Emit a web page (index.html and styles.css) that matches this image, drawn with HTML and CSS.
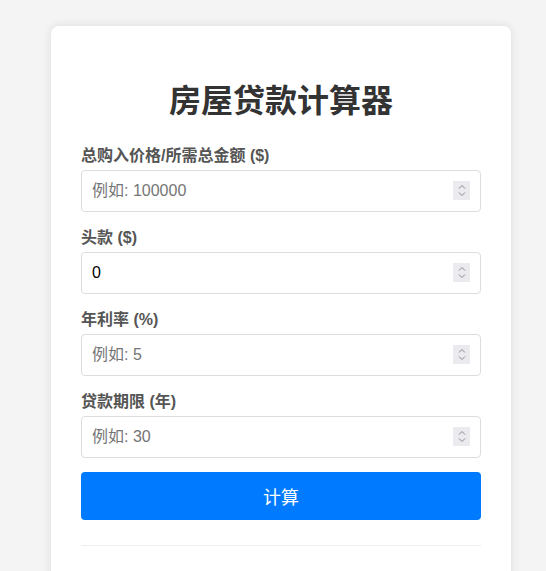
FILE: index.html
```html
<!DOCTYPE html>
<html lang="zh">
<head>
<meta charset="utf-8">
<title>房屋贷款计算器</title>
<link rel="stylesheet" href="styles.css">
</head>
<body>
<div class="card">
  <h1 class="title">房屋贷款计算器</h1>
  <div class="field">
    <label class="label" for="price">总购入价格/所需总金额 ($)</label>
    <div class="wrap">
      <input class="input" id="price" type="number" placeholder="例如: 100000">
      <span class="spin"><svg width="8" height="13" viewBox="0 0 8 13"><path d="M1 4.5 L4 1.5 L7 4.5 M1 8.5 L4 11.5 L7 8.5" fill="none" stroke="#8a8a8a" stroke-width="1"/></svg></span>
    </div>
  </div>
  <div class="field">
    <label class="label" for="down">头款 ($)</label>
    <div class="wrap">
      <input class="input" id="down" type="number" value="0">
      <span class="spin"><svg width="8" height="13" viewBox="0 0 8 13"><path d="M1 4.5 L4 1.5 L7 4.5 M1 8.5 L4 11.5 L7 8.5" fill="none" stroke="#8a8a8a" stroke-width="1"/></svg></span>
    </div>
  </div>
  <div class="field">
    <label class="label" for="rate">年利率 (%)</label>
    <div class="wrap">
      <input class="input" id="rate" type="number" placeholder="例如: 5">
      <span class="spin"><svg width="8" height="13" viewBox="0 0 8 13"><path d="M1 4.5 L4 1.5 L7 4.5 M1 8.5 L4 11.5 L7 8.5" fill="none" stroke="#8a8a8a" stroke-width="1"/></svg></span>
    </div>
  </div>
  <div class="field last">
    <label class="label" for="term">贷款期限 (年)</label>
    <div class="wrap">
      <input class="input" id="term" type="number" placeholder="例如: 30">
      <span class="spin"><svg width="8" height="13" viewBox="0 0 8 13"><path d="M1 4.5 L4 1.5 L7 4.5 M1 8.5 L4 11.5 L7 8.5" fill="none" stroke="#8a8a8a" stroke-width="1"/></svg></span>
    </div>
  </div>
  <button class="btn" type="button">计算</button>
  <hr class="divider">
</div>
</body>
</html>
```
FILE: styles.css
```css
html, body {
  margin: 0;
  padding: 0;
}
body {
  background: #f4f4f4;
  font-family: "Liberation Sans", Arial, "Noto Sans CJK SC", sans-serif;
  color: #333;
  padding: 26px 35px 0 51px;
}
.card {
  width: 400px;
  background: #fff;
  border-radius: 8px;
  box-shadow: 0 0 10px rgba(0, 0, 0, 0.1);
  padding: 30px 30px 40px;
}
.title {
  margin: 26px 0 26px;
  text-align: center;
  font-size: 32px;
  line-height: 38px;
  font-weight: bold;
  color: #333;
}
.field {
  margin-bottom: 16px;
}
.field.last {
  margin-bottom: 14px;
}
.label {
  display: block;
  font-size: 16px;
  line-height: 19px;
  font-weight: bold;
  color: #555;
  margin-bottom: 5px;
}
.wrap {
  position: relative;
}
.input {
  display: block;
  box-sizing: border-box;
  width: 100%;
  height: 42px;
  padding: 10px;
  border: 1px solid #ddd;
  border-radius: 4px;
  font-family: "Liberation Sans", Arial, "Noto Sans CJK SC", sans-serif;
  font-size: 16px;
  color: #000;
  background: #fff;
  margin: 0;
  appearance: textfield;
  -moz-appearance: textfield;
}
.input::-webkit-inner-spin-button,
.input::-webkit-outer-spin-button {
  -webkit-appearance: none;
  margin: 0;
}
.input::placeholder {
  color: #757575;
}
.spin {
  position: absolute;
  top: 11px;
  right: 11px;
  width: 17px;
  height: 19px;
  background: #ebebef;
  display: flex;
  align-items: center;
  justify-content: center;
  pointer-events: none;
}
.spin svg {
  display: block;
}
.btn {
  display: block;
  width: 100%;
  height: 48px;
  border: none;
  border-radius: 4px;
  background: #007bff;
  color: #fff;
  font-family: "Liberation Sans", Arial, "Noto Sans CJK SC", sans-serif;
  font-size: 18px;
  margin: 0;
  padding: 0;
}
.divider {
  border: none;
  border-top: 1px solid #eee;
  margin: 25px 0 0;
}
```
